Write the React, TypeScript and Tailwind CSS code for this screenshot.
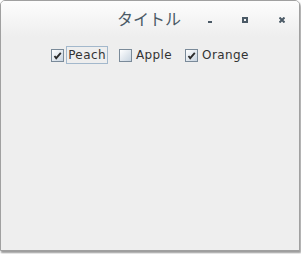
import React from 'react'

const Check = ({ checked }: { checked: boolean }) => (
    <span className="w-[13px] h-[13px] border border-[#7a8a99] bg-gradient-to-br from-[#ffffff] to-[#c8d4e0] flex items-center justify-center">
        {checked && (
            <svg width="9" height="9" viewBox="0 0 9 9">
                <path d="M1.5 5 L3.2 7.2 L7.8 1.8" stroke="#2b2b2b" strokeWidth="1.8" fill="none" />
            </svg>
        )}
    </span>
)

const items = [
    { label: "Peach", checked: true, focus: true },
    { label: "Apple", checked: false, focus: false },
    { label: "Orange", checked: true, focus: false },
]

const App = () => {
    return (
        <div className="w-[301px] h-[254px] bg-white">
            <div className="w-[300px] h-[251px] rounded-t-[5px] border border-[#a0a0a0] bg-[#eeeeee] shadow-[1px_2px_2px_rgba(0,0,0,0.4)] flex flex-col overflow-hidden">
                {/* title bar */}
                <div className="h-[36px] bg-gradient-to-b from-[#fdfdfd] to-[#eeeeee] flex items-center text-[#4b5a66] relative" style={{ fontFamily: '"Noto Sans CJK JP", sans-serif' }}>
                    <span className="absolute left-[116px] top-[5px] text-[16px]">タイトル</span>
                    <span className="absolute left-[207px] top-[20px] w-[4px] h-[2px] bg-[#4b5a66]" />
                    <span className="absolute left-[241px] top-[16px] w-[6px] h-[6px] border-2 border-[#4b5a66]" />
                    <svg className="absolute left-[278px] top-[16px]" width="6" height="6" viewBox="0 0 6 6">
                        <path d="M0.5 0.5 L5.5 5.5 M5.5 0.5 L0.5 5.5" stroke="#4b5a66" strokeWidth="2" />
                    </svg>
                </div>
                {/* content */}
                <div className="flex justify-center gap-[11px] pt-[9px] pl-[2px]" style={{ fontFamily: '"DejaVu Sans", sans-serif' }}>
                    {items.map(item => (
                        <div key={item.label} className="flex items-center gap-[2px]">
                            <Check checked={item.checked} />
                            <span className={`text-[12px] tracking-[0.4px] text-[#333333] px-[1px] leading-[16px] border ${item.focus ? "border-[#a3b8cc]" : "border-transparent"}`}>{item.label}</span>
                        </div>
                    ))}
                </div>
            </div>
        </div>
    )
}

export default App
